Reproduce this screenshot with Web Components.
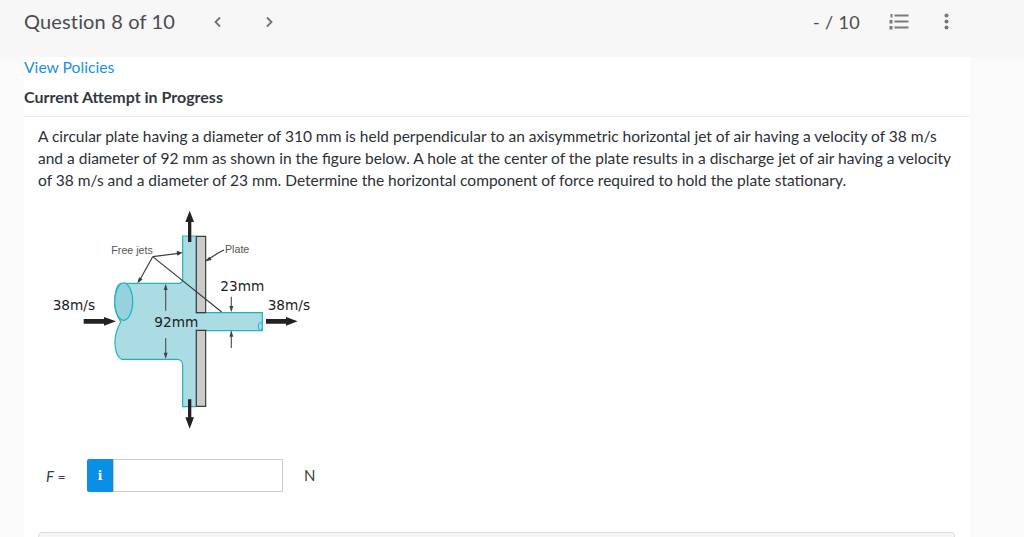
<!DOCTYPE html>
<html lang="en">
<head>
<meta charset="utf-8">
<title>Question 8 of 10</title>
<style>
  html, body { height: 100%; }
  body {
    margin: 0;
    height: 537px;
    overflow: hidden;
    background: #fafafa;
    color: #2f3a44;
    font-family: Lato, "Liberation Sans", sans-serif;
  }
</style>
</head>
<body>
<quiz-header></quiz-header>
<quiz-card>
  <question-text>A circular plate having a diameter of 310 mm is held perpendicular to an axisymmetric horizontal jet of air having a velocity of 38 m/s and a diameter of 92 mm as shown in the figure below. A hole at the center of the plate results in a discharge jet of air having a velocity of 38 m/s and a diameter of 23 mm. Determine the horizontal component of force required to hold the plate stationary.</question-text>
  <jet-figure></jet-figure>
  <answer-row></answer-row>
</quiz-card>

<script>
const headerTemplate = document.createElement('template')
headerTemplate.innerHTML = `
<style>
  :host {
    display: flex;
    align-items: center;
    height: 57px;
    padding: 0 75px 14px 24px;
    box-sizing: border-box;
    background: #f7f7f7;
    color: #494c4e;
  }
  h1 { margin: -2px 0 0; font-size: 20px; font-weight: 400; letter-spacing: .15px; }
  .nav { display: flex; gap: 43px; margin-left: 38px; }
  .nav svg { display: block; }
  .right { display: flex; align-items: center; margin-left: auto; }
  .score { font-size: 18px; letter-spacing: .35px; }
  .list { margin-left: 29px; }
  .more { margin-left: 35px; }
</style>
<h1>Question 8 of 10</h1>
<div class="nav">
  <svg width="9" height="12" viewBox="0 0 9 12"><path d="M7 1.5 2.5 6 7 10.500" fill="none" stroke="#6e7376" stroke-width="1.800"/></svg>
  <svg width="9" height="12" viewBox="0 0 9 12"><path d="M2 1.500 6.500 6 2 10.500" fill="none" stroke="#6e7376" stroke-width="1.800"/></svg>
</div>
<div class="right">
  <span class="score">- / 10</span>
  <svg class="list" width="20" height="17" viewBox="0 0 20 17">
    <g fill="#7b7b7b">
      <rect x="5.500" y="1.500" width="14" height="2"/><rect x="5.500" y="7.500" width="14" height="2"/><rect x="5.500" y="13.500" width="14" height="2"/>
      <rect x="1.500" y="1" width="2" height="3.500"/><rect x="0.500" y="7" width="3" height="3.500"/><rect x="0.500" y="13" width="3" height="3.500"/>
    </g>
  </svg>
  <svg class="more" width="5" height="17" viewBox="0 0 5 17">
    <circle cx="2.500" cy="2.500" r="2" fill="#777"/><circle cx="2.500" cy="8.500" r="2" fill="#777"/><circle cx="2.500" cy="14.500" r="2" fill="#777"/>
  </svg>
</div>
`

customElements.define('quiz-header',
  class extends HTMLElement {
    constructor () {
      super()
      this.attachShadow({ mode: 'open' }).appendChild(headerTemplate.content.cloneNode(true))
    }
  })

const cardTemplate = document.createElement('template')
cardTemplate.innerHTML = `
<style>
  :host {
    display: block;
    width: 946px;
    height: 480px;
    margin-left: 24px;
    background: #fff;
    overflow: hidden;
  }
  a { display: block; margin-top: 1px; color: #1a8fe3; font-size: 15.700px; line-height: 18px; text-decoration: none; }
  h2 { margin: 12px 0 0; padding-bottom: 10px; border-bottom: 1px solid #ececec; font-size: 16px; line-height: 18px; font-weight: 700; color: #33383d; }
  .body { padding: 8px 14px 0; }
  .next { height: 40px; margin: 40px 15px 0 14px; background: #f5f5f5; border: 1px solid #dcdcdc; border-radius: 4px 4px 0 0; }
</style>
<a href="#">View Policies</a>
<h2>Current Attempt in Progress</h2>
<div class="body"><slot></slot></div>
<div class="next"></div>
`

customElements.define('quiz-card',
  class extends HTMLElement {
    constructor () {
      super()
      this.attachShadow({ mode: 'open' }).appendChild(cardTemplate.content.cloneNode(true))
    }
  })

const questionTemplate = document.createElement('template')
questionTemplate.innerHTML = `
<style>
  :host { display: block; font-size: 15.530px; line-height: 22px; color: #2b3036; }
</style>
<slot></slot>
`

customElements.define('question-text',
  class extends HTMLElement {
    constructor () {
      super()
      this.attachShadow({ mode: 'open' }).appendChild(questionTemplate.content.cloneNode(true))
    }
  })

const figureTemplate = document.createElement('template')
figureTemplate.innerHTML = `
<style>
  :host { display: block; margin: 9px 0 0 -8px; height: 240px; }
  svg { display: block; }
  .dim { font-family: "DejaVu Sans", sans-serif; font-size: 41px; fill: #1c1c1c; }
  .label { font-family: "Liberation Sans", sans-serif; font-size: 32px; fill: #555; }
</style>
<svg width="300" height="240" viewBox="0 0 900 720">
  <path d="M275 250H445Q458 250 458 236V108H498V338H697V392H498V620H458V496Q458 478 440 478H275C258 470 254 440 255 420C256 395 266 380 272 365C262 350 254 330 254 305C254 275 262 250 275 250Z" fill="#abdbe3" stroke="#1fb3bd" stroke-width="3.500"/>
  <path d="M498 108V338M498 392V620" stroke="#abdbe3" stroke-width="4"/>
  <ellipse cx="281" cy="305" rx="27" ry="56" fill="#96d2dd" stroke="#1fb3bd" stroke-width="3.500"/>
  <ellipse cx="691" cy="379" rx="6" ry="12" fill="#abdbe3" stroke="#1fb3bd" stroke-width="3"/>
  <path d="M499 109H527V338H499ZM499 391H527V619H499Z" fill="#cbcbcb" stroke="#3a3a3a" stroke-width="3.500"/>
  <g fill="#222" stroke="none">
    <path d="M474 126V66H466L479 32 492 66H484V126Z"/>
    <path d="M474 598V652H466L479 686 492 652H484V598Z"/>
    <path d="M161 357H222V351L258 364 222 377V371H161Z"/>
    <path d="M708 357H768V351L803 364 768 377V371H708Z"/>
  </g>
  <g fill="none" stroke="#3a3a3a" stroke-width="3.500">
    <path d="M368 170 326 246M368 170 575 336M368 170 446 160"/>
    <path d="M528 182 563 160 582 150"/>
  </g>
  <g fill="#3a3a3a">
    <path d="M458 158 440 152 442 167Z"/>
    <path d="M322 250 327 232 338 238Z"/>
    <path d="M526 184 538 170 545 180Z"/>
  </g>
  <g stroke="#555" stroke-width="3.500" fill="none">
    <path d="M407 256V332M407 414V472M604 290V332M604 394V444"/>
  </g>
  <g fill="#444">
    <path d="M407 252 401 270H413ZM407 476 401 458H413ZM604 336 598 318H610ZM604 392 598 410H610Z"/>
  </g>
  <text class="label" x="244" y="162">Free jets</text>
  <text class="label" x="585" y="159">Plate</text>
  <text class="dim" x="571" y="272">23mm</text>
  <text class="dim" x="68" y="330">38m/s</text>
  <text class="dim" x="713" y="330">38m/s</text>
  <text class="dim" x="373" y="380">92mm</text>
</svg>
`

customElements.define('jet-figure',
  class extends HTMLElement {
    constructor () {
      super()
      this.attachShadow({ mode: 'open' }).appendChild(figureTemplate.content.cloneNode(true))
    }
  })

const answerTemplate = document.createElement('template')
answerTemplate.innerHTML = `
<style>
  :host { display: flex; align-items: center; height: 33px; margin-top: 19px; margin-left: 8px; font-size: 14px; color: #3a3f44; }
  .name { width: 41px; }
  .name i { font-size: 15px; }
  .info { display: flex; align-items: center; justify-content: center; width: 26px; height: 33px; box-sizing: border-box; background: #0a8fe6; border-radius: 2px 0 0 2px; color: #fff; font-family: "DejaVu Serif", serif; font-size: 12px; font-weight: 700; }
  input { width: 170px; height: 33px; box-sizing: border-box; margin: 0; padding: 0 4px; border: 1px solid #ccc; background: #fff; outline: none; }
  .unit { margin-left: 21px; margin-top: -1px; font-size: 15px; }
</style>
<span class="name"><i>F</i> =</span>
<span class="info">i</span>
<input type="text" aria-label="F">
<span class="unit">N</span>
`

customElements.define('answer-row',
  class extends HTMLElement {
    constructor () {
      super()
      this.attachShadow({ mode: 'open' }).appendChild(answerTemplate.content.cloneNode(true))
    }
  })
</script>
</body>
</html>
